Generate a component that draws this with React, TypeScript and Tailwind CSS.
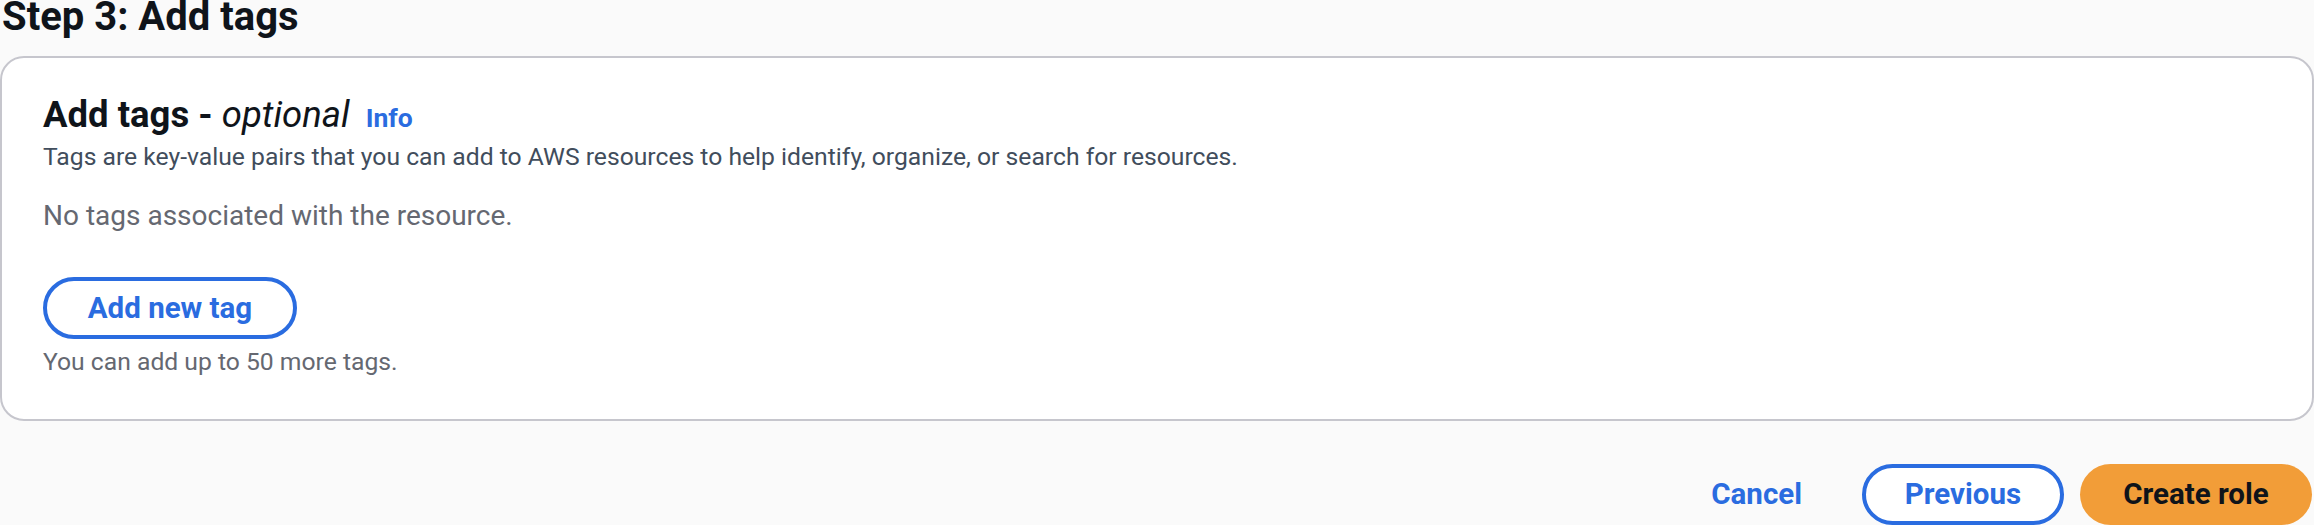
import React from "react";

export default function App() {
  return (
    <div className="min-h-[525px] w-[2314px] bg-[#fafafa] text-[#0f141a]" style={{ fontFamily: "Roboto, 'Open Sans', sans-serif" }}>
      <h1 className="pl-[2px] text-[40px] font-bold leading-[34px]">Step 3: Add tags</h1>
      <div className="mt-[22px] rounded-[24px] border-2 border-[#c6c6cd] bg-white px-[41px] pt-[39px] pb-[42px]">
        <div className="flex items-baseline gap-[16px] leading-[36px]">
          <h2 className="text-[36.5px] font-bold">
            Add tags - <span className="font-normal italic">optional</span>
          </h2>
          <span className="text-[26.5px] font-bold text-[#2a6ce0]">Info</span>
        </div>
        <p className="mt-[7px] text-[24.7px] leading-[28px] text-[#414d5c]">
          Tags are key-value pairs that you can add to AWS resources to help identify, organize, or search for resources.
        </p>
        <p className="mt-[28px] text-[28px] leading-[34px] text-[#656871]">No tags associated with the resource.</p>
        <button className="mt-[44px] flex h-[62px] w-[254px] items-center justify-center rounded-full border-4 border-[#2a6ce0] bg-white text-[29.5px] font-bold text-[#2a6ce0]">
          Add new tag
        </button>
        <p className="mt-[8px] text-[24.7px] leading-[30px] text-[#656871]">You can add up to 50 more tags.</p>
      </div>
      <div className="mt-[43px] flex items-center justify-end gap-[16px] pr-[2px]">
        <button className="pl-[20px] pr-[44px] text-[29.5px] font-bold text-[#2a6ce0]">Cancel</button>
        <button className="flex h-[61px] w-[202px] items-center justify-center rounded-full border-4 border-[#2a6ce0] bg-white text-[29.5px] font-bold text-[#2a6ce0]">
          Previous
        </button>
        <button className="flex h-[61px] w-[232px] items-center justify-center rounded-full bg-[#f29d38] text-[29.5px] font-bold text-[#0f141a]">
          Create role
        </button>
      </div>
    </div>
  );
}
